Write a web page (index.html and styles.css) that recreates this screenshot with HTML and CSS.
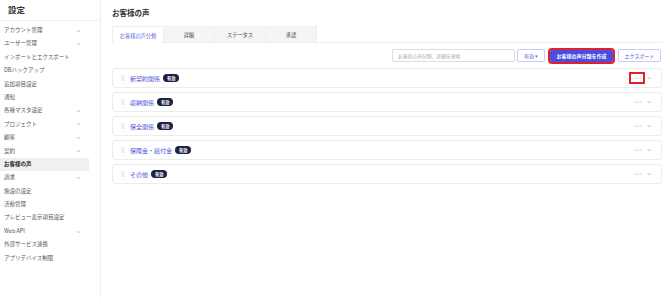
FILE: index.html
```html
<!DOCTYPE html>
<html lang="ja">
  <head>
    <meta charset="UTF-8" />
    <title>お客様の声</title>
    <link rel="stylesheet" href="styles.css">
  </head>
  <body>
    <aside class="sidebar">
      <div class="sidebar-title">設定</div>
      <ul class="menu">
        <li class="menu-item">アカウント管理<svg class="chev" viewBox="0 0 6 4"><path d="M1 1 L3 3 L5 1" /></svg></li>
        <li class="menu-item">ユーザー管理<svg class="chev" viewBox="0 0 6 4"><path d="M1 1 L3 3 L5 1" /></svg></li>
        <li class="menu-item">インポートとエクスポート</li>
        <li class="menu-item">DBバックアップ</li>
        <li class="menu-item">追加項目設定</li>
        <li class="menu-item">通知</li>
        <li class="menu-item">各種マスタ設定<svg class="chev" viewBox="0 0 6 4"><path d="M1 1 L3 3 L5 1" /></svg></li>
        <li class="menu-item">プロジェクト<svg class="chev" viewBox="0 0 6 4"><path d="M1 1 L3 3 L5 1" /></svg></li>
        <li class="menu-item">顧客<svg class="chev" viewBox="0 0 6 4"><path d="M1 1 L3 3 L5 1" /></svg></li>
        <li class="menu-item">契約<svg class="chev" viewBox="0 0 6 4"><path d="M1 1 L3 3 L5 1" /></svg></li>
        <li class="menu-item active">お客様の声</li>
        <li class="menu-item">請求<svg class="chev" viewBox="0 0 6 4"><path d="M1 1 L3 3 L5 1" /></svg></li>
        <li class="menu-item">施設の設定</li>
        <li class="menu-item">活動管理</li>
        <li class="menu-item">プレビュー表示項目設定</li>
        <li class="menu-item">Web API<svg class="chev" viewBox="0 0 6 4"><path d="M1 1 L3 3 L5 1" /></svg></li>
        <li class="menu-item">外部サービス連携</li>
        <li class="menu-item">アプリデバイス制限</li>
      </ul>
    </aside>

    <main class="content">
      <h1 class="page-title">お客様の声</h1>

      <div class="tabs">
        <div class="tab active">お客様の声分類</div>
        <div class="tab">詳細</div>
        <div class="tab">ステータス</div>
        <div class="tab">承認</div>
      </div>

      <div class="toolbar">
        <input type="text" class="search" placeholder="お客様の声分類、詳細を検索" />
        <button class="btn btn-outline btn-status">有効 &#x25BE;</button>
        <button class="btn btn-primary">お客様の声分類を作成</button>
        <button class="btn btn-outline btn-export">エクスポート</button>
      </div>

      <div class="rows">
        <div class="row">
          <svg class="handle" viewBox="0 0 4 6"><circle cx="1" cy="1" r="0.5" /><circle cx="3" cy="1" r="0.5" /><circle cx="1" cy="3" r="0.5" /><circle cx="3" cy="3" r="0.5" /><circle cx="1" cy="5" r="0.5" /><circle cx="3" cy="5" r="0.5" /></svg>
          <span class="row-title">新契約関係</span>
          <span class="badge">有効</span>
          <span class="dots marked"><svg viewBox="0 0 8 2"><circle cx="1" cy="1" r="0.6" /><circle cx="4" cy="1" r="0.6" /><circle cx="7" cy="1" r="0.6" /></svg></span>
          <svg class="row-chev" viewBox="0 0 6 4"><path d="M1 1 L3 3 L5 1" /></svg>
        </div>
        <div class="row">
          <svg class="handle" viewBox="0 0 4 6"><circle cx="1" cy="1" r="0.5" /><circle cx="3" cy="1" r="0.5" /><circle cx="1" cy="3" r="0.5" /><circle cx="3" cy="3" r="0.5" /><circle cx="1" cy="5" r="0.5" /><circle cx="3" cy="5" r="0.5" /></svg>
          <span class="row-title">収納関係</span>
          <span class="badge">有効</span>
          <span class="dots"><svg viewBox="0 0 8 2"><circle cx="1" cy="1" r="0.6" /><circle cx="4" cy="1" r="0.6" /><circle cx="7" cy="1" r="0.6" /></svg></span>
          <svg class="row-chev" viewBox="0 0 6 4"><path d="M1 1 L3 3 L5 1" /></svg>
        </div>
        <div class="row">
          <svg class="handle" viewBox="0 0 4 6"><circle cx="1" cy="1" r="0.5" /><circle cx="3" cy="1" r="0.5" /><circle cx="1" cy="3" r="0.5" /><circle cx="3" cy="3" r="0.5" /><circle cx="1" cy="5" r="0.5" /><circle cx="3" cy="5" r="0.5" /></svg>
          <span class="row-title">保全関係</span>
          <span class="badge">有効</span>
          <span class="dots"><svg viewBox="0 0 8 2"><circle cx="1" cy="1" r="0.6" /><circle cx="4" cy="1" r="0.6" /><circle cx="7" cy="1" r="0.6" /></svg></span>
          <svg class="row-chev" viewBox="0 0 6 4"><path d="M1 1 L3 3 L5 1" /></svg>
        </div>
        <div class="row">
          <svg class="handle" viewBox="0 0 4 6"><circle cx="1" cy="1" r="0.5" /><circle cx="3" cy="1" r="0.5" /><circle cx="1" cy="3" r="0.5" /><circle cx="3" cy="3" r="0.5" /><circle cx="1" cy="5" r="0.5" /><circle cx="3" cy="5" r="0.5" /></svg>
          <span class="row-title">保険金・給付金</span>
          <span class="badge">有効</span>
          <span class="dots"><svg viewBox="0 0 8 2"><circle cx="1" cy="1" r="0.6" /><circle cx="4" cy="1" r="0.6" /><circle cx="7" cy="1" r="0.6" /></svg></span>
          <svg class="row-chev" viewBox="0 0 6 4"><path d="M1 1 L3 3 L5 1" /></svg>
        </div>
        <div class="row">
          <svg class="handle" viewBox="0 0 4 6"><circle cx="1" cy="1" r="0.5" /><circle cx="3" cy="1" r="0.5" /><circle cx="1" cy="3" r="0.5" /><circle cx="3" cy="3" r="0.5" /><circle cx="1" cy="5" r="0.5" /><circle cx="3" cy="5" r="0.5" /></svg>
          <span class="row-title">その他</span>
          <span class="badge">有効</span>
          <span class="dots"><svg viewBox="0 0 8 2"><circle cx="1" cy="1" r="0.6" /><circle cx="4" cy="1" r="0.6" /><circle cx="7" cy="1" r="0.6" /></svg></span>
          <svg class="row-chev" viewBox="0 0 6 4"><path d="M1 1 L3 3 L5 1" /></svg>
        </div>
      </div>
    </main>
  </body>
</html>
```

FILE: styles.css
```css
* {
  box-sizing: border-box;
}

body {
  font-family: "Noto Sans CJK JP", "Noto Sans", sans-serif;
  margin: 0;
  display: flex;
  width: 670px;
  height: 298px;
  background-color: #fff;
  color: #333;
  overflow: hidden;
}

.sidebar {
  width: 101px;
  border-right: 1px solid #eee;
  flex-shrink: 0;
}

.sidebar-title {
  height: 21px;
  padding: 3px 0 0 8px;
  font-size: 8.5px;
  font-weight: bold;
  color: #333;
  border-bottom: 1px solid #f0f0f0;
}

.menu {
  list-style: none;
  margin: 3px 0 0;
  padding: 0;
  width: 89px;
}

.menu-item {
  height: 13.4px;
  line-height: 13.4px;
  padding-left: 4px;
  padding-right: 8px;
  display: flex;
  align-items: center;
  justify-content: space-between;
  font-size: 5.5px;
  color: #555;
  overflow: hidden;
}

.menu-item.active {
  background-color: #f0f0f0;
  font-weight: bold;
  color: #222;
}

.chev {
  width: 5px;
  height: 4px;
  fill: none;
  stroke: #8c8fe6;
  stroke-width: 0.8;
}

.content {
  flex: 1;
  padding: 0 8px 0 11px;
}

.page-title {
  margin: 0;
  height: 26px;
  padding-top: 7px;
  font-size: 7.5px;
  font-weight: bold;
  color: #333;
}

.tabs {
  display: flex;
  border-bottom: 1px solid #eee;
  height: 17px;
}

.tab {
  width: 52px;
  display: flex;
  align-items: center;
  justify-content: center;
  font-size: 5.2px;
  color: #444;
  background-color: #f5f5f5;
  border: 1px solid #eee;
  border-bottom: none;
  margin-right: -1px;
}

.tab.active {
  background-color: #fff;
  color: #5a5ce0;
  margin-bottom: -1px;
}

.toolbar {
  display: flex;
  justify-content: flex-end;
  align-items: center;
  gap: 2px;
  margin-top: 5px;
  padding-right: 1px;
  height: 15px;
}

.search {
  width: 123px;
  height: 13px;
  border: 1px solid #ddd;
  border-radius: 2px;
  padding: 0 5px;
  font-family: inherit;
  font-size: 4.8px;
  color: #333;
}

.search::placeholder {
  color: #aaa;
}

.btn {
  height: 13px;
  font-family: inherit;
  font-size: 5px;
  border-radius: 2px;
  padding: 0;
  cursor: pointer;
}

.btn-outline {
  background-color: #fff;
  border: 1px solid #c9cbf3;
  color: #4f52d8;
}

.btn-status {
  width: 28px;
}

.btn-export {
  width: 43px;
}

.btn-primary {
  background-color: #4a4de0;
  color: #fff;
  border: none;
  font-weight: bold;
  width: 63px;
  height: 12px;
  outline: 2px solid #e0202a;
  margin: 0 3px;
}

.rows {
  display: flex;
  flex-direction: column;
  gap: 4px;
  margin-top: 5px;
}

.row {
  height: 20px;
  border: 1px solid #ececec;
  border-radius: 3px;
  display: flex;
  align-items: center;
  padding: 0 9px 0 8px;
}

.handle {
  width: 4px;
  height: 6px;
  fill: #aaa;
  margin-right: 5px;
}

.row-title {
  color: #4f52d8;
  font-size: 6px;
  margin-right: 3px;
}

.badge {
  background-color: #1d2140;
  color: #fff;
  font-size: 4.2px;
  font-weight: bold;
  border-radius: 4px;
  padding: 1px 4px;
}

.dots {
  margin-left: auto;
  width: 16px;
  height: 12px;
  display: flex;
  align-items: center;
  justify-content: center;
}

.dots svg {
  width: 7px;
  height: 2px;
  fill: #888;
}

.dots.marked {
  outline: 2px solid #e0202a;
  outline-offset: -2px;
}

.row-chev {
  width: 5px;
  height: 4px;
  fill: none;
  stroke: #999;
  stroke-width: 0.8;
  margin-left: 2px;
}
```
